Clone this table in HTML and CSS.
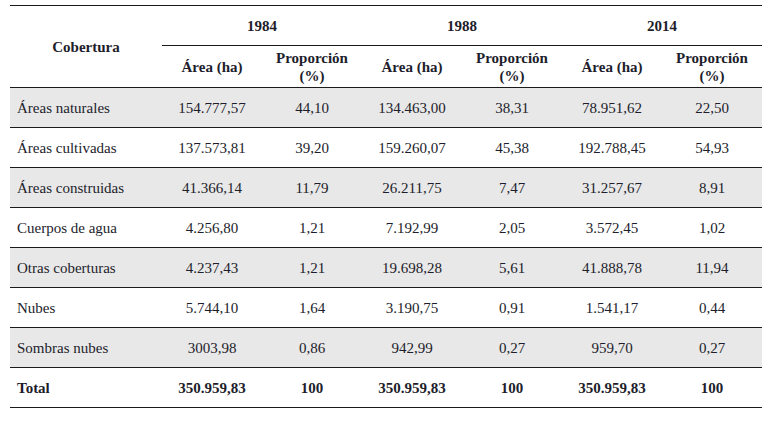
FILE: index.html
```html
<!DOCTYPE html>
<html lang="es">
<head>
<meta charset="utf-8">
<title>Cobertura</title>
<link rel="stylesheet" href="styles.css">
</head>
<body>
<table class="data">
  <colgroup>
    <col class="c-name">
    <col class="c-num"><col class="c-num">
    <col class="c-num"><col class="c-num">
    <col class="c-num"><col class="c-num">
  </colgroup>
  <thead>
    <tr class="years">
      <th rowspan="2" class="name-head">Cobertura</th>
      <th colspan="2" class="year">1984</th>
      <th colspan="2" class="year">1988</th>
      <th colspan="2" class="year">2014</th>
    </tr>
    <tr class="subs">
      <th>Área (ha)</th><th>Proporción<br>(%)</th>
      <th>Área (ha)</th><th>Proporción<br>(%)</th>
      <th>Área (ha)</th><th>Proporción<br>(%)</th>
    </tr>
  </thead>
  <tbody>
    <tr class="shade"><td>Áreas naturales</td><td>154.777,57</td><td>44,10</td><td>134.463,00</td><td>38,31</td><td>78.951,62</td><td>22,50</td></tr>
    <tr><td>Áreas cultivadas</td><td>137.573,81</td><td>39,20</td><td>159.260,07</td><td>45,38</td><td>192.788,45</td><td>54,93</td></tr>
    <tr class="shade"><td>Áreas construidas</td><td>41.366,14</td><td>11,79</td><td>26.211,75</td><td>7,47</td><td>31.257,67</td><td>8,91</td></tr>
    <tr><td>Cuerpos de agua</td><td>4.256,80</td><td>1,21</td><td>7.192,99</td><td>2,05</td><td>3.572,45</td><td>1,02</td></tr>
    <tr class="shade"><td>Otras coberturas</td><td>4.237,43</td><td>1,21</td><td>19.698,28</td><td>5,61</td><td>41.888,78</td><td>11,94</td></tr>
    <tr><td>Nubes</td><td>5.744,10</td><td>1,64</td><td>3.190,75</td><td>0,91</td><td>1.541,17</td><td>0,44</td></tr>
    <tr class="shade"><td>Sombras nubes</td><td>3003,98</td><td>0,86</td><td>942,99</td><td>0,27</td><td>959,70</td><td>0,27</td></tr>
    <tr class="total"><td>Total</td><td>350.959,83</td><td>100</td><td>350.959,83</td><td>100</td><td>350.959,83</td><td>100</td></tr>
  </tbody>
</table>
</body>
</html>
```

FILE: styles.css
```css
html, body {
  margin: 0;
  padding: 0;
  background: #ffffff;
}
body {
  padding: 5px 0 0 10px;
  font-family: "Liberation Serif", "Times New Roman", serif;
  font-size: 15px;
  color: #1d1d2b;
}
.data {
  border-collapse: collapse;
  table-layout: fixed;
  width: 752px;
  border-top: 1px solid #1a1a1a;
  border-bottom: 1px solid #1a1a1a;
}
.c-name { width: 152px; }
.c-num { width: 100px; }
.data th, .data td {
  padding: 0;
  text-align: center;
  vertical-align: middle;
  line-height: 18px;
}
.data th {
  font-weight: bold;
}
.years th.year {
  height: 39px;
  border-bottom: 1px solid #1a1a1a;
}
.subs th {
  height: 41px;
  border-bottom: 1px solid #1a1a1a;
}
.name-head {
  border-bottom: 1px solid #1a1a1a;
}
.data tbody td {
  height: 39px;
  border-bottom: 1px solid #1a1a1a;
}
.data tbody td:first-child {
  text-align: left;
  padding-left: 7px;
}
.shade td {
  background: #e8e8e8;
}
.total td {
  font-weight: bold;
}
```
